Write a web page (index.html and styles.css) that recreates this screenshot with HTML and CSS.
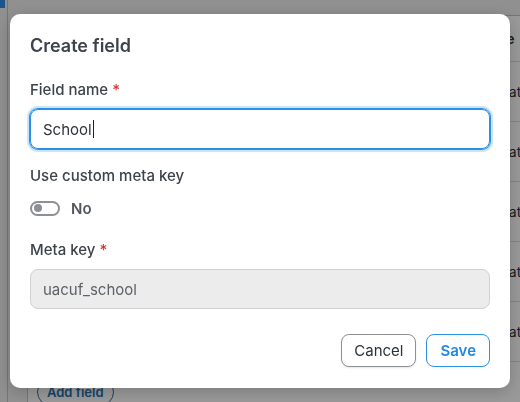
FILE: index.html
```html
<!DOCTYPE html>
<html lang="en">
<head>
    <meta charset="UTF-8">
    <meta name="viewport" content="width=device-width, initial-scale=1.0">
    <title>Create field</title>
    <link rel="stylesheet" href="styles.css">
</head>
<body>
    <div class="page">
        <div class="rail"><span class="rail-active"></span></div>
        <main class="main">
            <section class="panel">
                <table class="fields">
                    <thead>
                        <tr><th>Label</th><th>Meta key</th><th>Name</th></tr>
                    </thead>
                    <tbody>
                        <tr><td>First name</td><td>uacuf_first_name</td><td>Format</td></tr>
                        <tr><td>Last name</td><td>uacuf_last_name</td><td>Format</td></tr>
                        <tr><td>Phone</td><td>uacuf_phone</td><td>Format</td></tr>
                        <tr><td>City</td><td>uacuf_city</td><td>Format</td></tr>
                        <tr><td>Country</td><td>uacuf_country</td><td>Format</td></tr>
                    </tbody>
                </table>
                <button class="add-btn">Add field</button>
            </section>
        </main>
    </div>

    <div class="overlay">
        <div class="modal" role="dialog" aria-labelledby="modal-title">
            <h2 class="modal-title" id="modal-title">Create field</h2>

            <div class="field">
                <label class="field-label">Field name <span class="req">*</span></label>
                <div class="text-input is-focused">School<span class="caret"></span></div>
            </div>

            <div class="field field-toggle">
                <label class="field-label">Use custom meta key</label>
                <div class="toggle-row">
                    <span class="toggle"><span class="toggle-knob"></span></span>
                    <span class="toggle-text">No</span>
                </div>
            </div>

            <div class="field">
                <label class="field-label">Meta key <span class="req">*</span></label>
                <div class="text-input is-disabled">uacuf_school</div>
            </div>

            <div class="modal-actions">
                <button class="btn btn-cancel">Cancel</button>
                <button class="btn btn-save">Save</button>
            </div>
        </div>
    </div>
</body>
</html>
```

FILE: styles.css
```css
* {
    box-sizing: border-box;
}
body {
    margin: 0;
    font-family: Inter, "Open Sans", Arial, sans-serif;
    background-color: #f0f0f1;
    color: #2c3338;
    overflow: hidden;
}

/* page behind the dialog */
.page {
    display: flex;
    height: 402px;
}
.rail {
    width: 8px;
    border-right: 1px solid #c3c4c7;
    background-color: #f0f0f1;
}
.rail-active {
    display: block;
    width: 5px;
    height: 8px;
    background-color: #2e8ae6;
}
.main {
    flex: 1;
    padding: 15px 0 0 19px;
    min-width: 0;
    overflow: hidden;
}
.panel {
    background: white;
    border-left: 1px solid #c3c4c7;
    border-top: 1px solid #c3c4c7;
    height: 100%;
    padding: 0 0 0 9px;
}
.fields {
    width: 520px;
    border-collapse: collapse;
    font-size: 14px;
    table-layout: fixed;
}
.fields th, .fields td {
    text-align: left;
    padding: 0 8px;
    border-bottom: 1px solid #dcdcde;
    white-space: nowrap;
    overflow: hidden;
}
.fields th {
    height: 45px;
    font-weight: 600;
}
.fields td {
    height: 60px;
}
.fields th:nth-child(1), .fields td:nth-child(1) {
    width: 200px;
}
.fields th:nth-child(2), .fields td:nth-child(2) {
    width: 230px;
}
.add-btn {
    margin-top: 16px;
    height: 28px;
    padding: 0 9px;
    border: 1px solid #2271b1;
    border-radius: 14px;
    background: white;
    color: #2271b1;
    font-family: inherit;
    font-size: 13px;
    font-weight: 600;
}

/* dialog */
.overlay {
    position: fixed;
    inset: 0;
    display: flex;
    align-items: center;
    justify-content: center;
    background-color: rgba(0, 0, 0, 0.4);
}
.modal {
    width: 500px;
    background: white;
    border-radius: 10px;
    padding: 20px 20px 21px;
    box-shadow: 0 4px 16px rgba(0, 0, 0, 0.2);
    display: flex;
    flex-direction: column;
}
.modal-title {
    margin: 0;
    font-size: 18px;
    line-height: 24px;
    font-weight: 600;
    color: #3c434a;
}
.field {
    margin-top: 22px;
    display: flex;
    flex-direction: column;
    gap: 9px;
}
.field-toggle {
    margin-top: 17px;
    gap: 12px;
}
.field-label {
    font-size: 15px;
    line-height: 20px;
    font-weight: 500;
    color: #3c434a;
}
.req {
    color: #d63638;
}
.text-input {
    height: 40px;
    display: flex;
    align-items: center;
    padding: 0 12px;
    border: 1px solid #c3c4c7;
    border-radius: 8px;
    font-size: 15px;
    color: #2c3338;
}
.text-input.is-focused {
    border-color: #2a90e8;
    box-shadow: 0 0 0 1px #2a90e8, 0 0 1px 3px rgba(42, 144, 232, 0.25);
}
.text-input.is-disabled {
    background-color: #ececec;
    border-color: #d0d0d0;
    color: #5c6168;
}
.caret {
    display: inline-block;
    width: 1px;
    height: 18px;
    margin-left: 1px;
    background-color: #1d2327;
}
.toggle-row {
    display: flex;
    align-items: center;
    gap: 11px;
    height: 20px;
}
.toggle {
    width: 30px;
    height: 15px;
    border: 2px solid #8c8f94;
    border-radius: 8px;
    display: flex;
    align-items: center;
    padding-left: 2px;
}
.toggle-knob {
    width: 8px;
    height: 8px;
    border-radius: 50%;
    background-color: #8c8f94;
}
.toggle-text {
    font-size: 15px;
    font-weight: 600;
    color: #50575e;
}
.modal-actions {
    margin-top: 25px;
    display: flex;
    justify-content: flex-end;
    gap: 10px;
}
.btn {
    height: 33px;
    padding: 0 12px;
    border-radius: 8px;
    background: white;
    font-family: inherit;
    font-size: 15px;
    cursor: pointer;
}
.btn-cancel {
    border: 1px solid #8c8f94;
    color: #2c3338;
    box-shadow: 0 1px 2px rgba(0, 0, 0, 0.1);
}
.btn-save {
    border: 1px solid #2a90e8;
    color: #1e88e5;
    font-weight: 600;
    padding: 0 13px;
}
```
